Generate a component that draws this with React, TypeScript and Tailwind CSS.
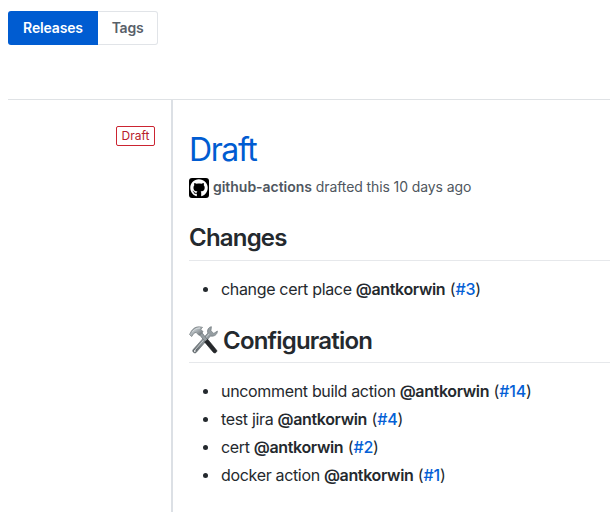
import { FaGithub } from "react-icons/fa";

type Change = { text: string; issue: string };

const changes: Change[] = [{ text: "change cert place", issue: "#3" }];

const configuration: Change[] = [
  { text: "uncomment build action", issue: "#14" },
  { text: "test jira", issue: "#4" },
  { text: "cert", issue: "#2" },
  { text: "docker action", issue: "#1" },
];

function ToolsIcon() {
  return (
    <svg viewBox="0 0 30 30" className="h-[30px] w-[30px] shrink-0" aria-hidden="true">
      <defs>
        <linearGradient id="steel" x1="0" y1="0" x2="1" y2="1">
          <stop offset="0" stopColor="#5c6468" />
          <stop offset="0.4" stopColor="#b4bbbf" />
          <stop offset="1" stopColor="#5b6165" />
        </linearGradient>
        <linearGradient id="wrench" x1="1" y1="0" x2="0" y2="1">
          <stop offset="0" stopColor="#9aa2a6" />
          <stop offset="0.55" stopColor="#8f979b" />
          <stop offset="1" stopColor="#565c60" />
        </linearGradient>
      </defs>
      <path
        d="M22.4 1.7c-3 .5-4.6 3.6-3.5 6.3L4.2 24.5c-1.6 1.8 1.2 4.6 3 2.9L21.5 11c3.5.9 6.8-1.3 6.9-4.9l-3.6 2.3-2.9-2.5Z"
        fill="url(#wrench)"
        stroke="#70787c"
        strokeWidth="0.7"
      />
      <path d="M20.2 8.9 6 25" stroke="#cdd2d5" strokeWidth="0.9" />
      <circle cx="5.8" cy="26" r="0.9" fill="#eceff0" />
      <path d="M9.5 8.5 12 6.5 19.2 15.5 16.7 17.5Z" fill="#969ea2" stroke="#5d656a" strokeWidth="0.6" />
      <path d="M15.6 17 18.8 14.4 27.6 25.2c1 1.5-1.5 3.6-3.1 2.3Z" fill="#25282b" stroke="#15171a" strokeWidth="0.6" />
      <path
        d="M.5 9.5 2.4 6C5 2.2 9 .9 13.6 2.4L11.8 4.2l2.3 2.6-4 3.7-3-3.1-2.1.8-2.3 3.4Z"
        fill="url(#steel)"
        stroke="#6a7276"
        strokeWidth="0.6"
      />
      <path d="M3.4 6.8C5.6 4 8 3 11 3" stroke="#dfe3e5" strokeWidth="0.9" fill="none" />
    </svg>
  );
}

function ChangeList({ items }: { items: Change[] }) {
  return (
    <ul className="mt-[14px]">
      {items.map((item) => (
        <li key={item.issue} className="flex h-7 items-center">
          <span className="ml-[14px] mr-[13px] h-[5px] w-[5px] shrink-0 rounded-full bg-[#24292e]" />
          <span className="whitespace-pre text-[16px] leading-6 tracking-[-0.33px]">
            {item.text} <span className="font-semibold tracking-[-0.36px]">@antkorwin</span>
            <span className="tracking-[-0.1px]"> (<a className="font-medium tracking-[-0.2px] text-[#0460d6]">{item.issue}</a>)</span>
          </span>
        </li>
      ))}
    </ul>
  );
}

export default function App() {
  return (
    <div className="flex h-[512px] w-[610px] flex-col overflow-hidden bg-white pl-2 pt-[11px] font-['Inter','Liberation_Sans',sans-serif] text-[#24292e]">
      <nav className="flex h-[34px] text-[14px] font-semibold leading-5">
        <a className="flex w-[90px] items-center justify-center rounded-l-[3px] bg-[#005cd1] tracking-[-0.15px] text-white">Releases</a>
        <a className="flex w-[60px] items-center justify-center rounded-r-[3px] border border-l-0 border-[#e1e4e8] tracking-[-0.25px] text-[#586069]">Tags</a>
      </nav>

      <div className="mt-[54px] flex flex-1 border-t border-[#dfe2e5]">
        <aside className="flex w-[163px] items-start justify-end pr-4 pt-[26px]">
          <span className="flex h-5 w-[39px] items-center justify-center rounded-[2px] border border-[#cb2431] text-[12px] leading-4 text-[#b8202c]">
            Draft
          </span>
        </aside>

        <main className="flex-1 border-l-2 border-[#dce0e5] pl-4">
          <h1 className="mt-[26px] text-[32px] leading-[48px] tracking-[-1.4px] text-[#005cd1]">Draft</h1>
          <p className="mt-[4px] flex h-5 items-center text-[14px] text-[#4f5760]">
            <span className="mr-1 flex h-5 w-5 items-center justify-center rounded-[3px] bg-black">
              <FaGithub className="h-[18px] w-[18px] text-white" />
            </span>
            <span className="whitespace-pre pb-[3px] tracking-[-0.1px]">
              <b className="font-semibold tracking-[-0.03px]">github-actions</b> drafted this 10 days ago
            </span>
          </p>

          <h2 className="mt-[24px] flex h-[39px] items-start border-b border-[#e6e8eb] text-[24px] font-semibold leading-[32px] tracking-[-0.8px]">Changes</h2>
          <ChangeList items={changes} />

          <h2 className="mt-[22px] flex h-[38px] items-start border-b border-[#e6e8eb] text-[24px] font-semibold leading-[32px] tracking-[-0.8px]">
            <ToolsIcon />
            <span className="ml-1">Configuration</span>
          </h2>
          <ChangeList items={configuration} />
        </main>
      </div>
    </div>
  );
}
